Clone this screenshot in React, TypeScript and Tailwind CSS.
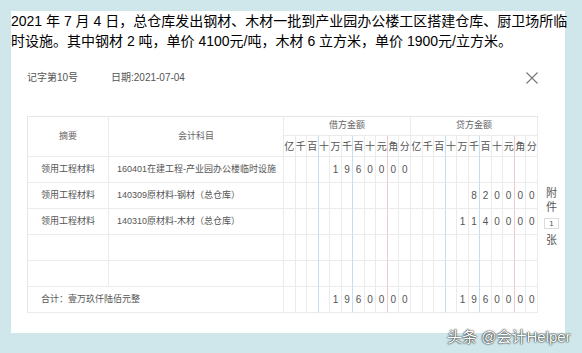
import React from 'react'

const FONT = "font-['Liberation_Sans','Noto_Sans_CJK_SC',sans-serif]"
const DIGITS = ['亿', '千', '百', '十', '万', '千', '百', '十', '元', '角', '分']

interface Entry {
  summary: string
  account: string
  debit: string
  credit: string
}

const entries: Entry[] = [
  { summary: '领用工程材料', account: '160401在建工程-产业园办公楼临时设施', debit: '1960000', credit: '' },
  { summary: '领用工程材料', account: '140309原材料-钢材（总仓库）', debit: '', credit: '820000' },
  { summary: '领用工程材料', account: '140310原材料-木材（总仓库）', debit: '', credit: '1140000' },
  { summary: '', account: '', debit: '', credit: '' },
  { summary: '', account: '', debit: '', credit: '' },
]

// right border colour of each amount column: blue between thousand groups, red before 角
function lineColor(i: number): string {
  if (i === 2 || i === 5) return 'border-r-[#bfe0f5]'
  if (i === 8) return 'border-r-[#f2c8c8]'
  return 'border-r-[#ebebeb]'
}

function spread(amount: string): string[] {
  const chars = amount.split('')
  return Array.from({ length: 11 }, (_, i) => chars[i - (11 - chars.length)] ?? '')
}

function AmountCells({ amount }: { amount: string }) {
  return (
    <>
      {spread(amount).map((d, i) => (
        <div
          key={i}
          className={`flex items-center justify-center border-r border-b border-b-[#ebebeb] text-[10px] text-[#555] ${lineColor(i)}`}
        >
          {d}
        </div>
      ))}
    </>
  )
}

const GRID = 'grid grid-cols-[81px_175px_repeat(22,minmax(0,1fr))]'

export default function App() {
  return (
    <div className={`relative w-[582px] h-[353px] bg-[#cfe7ea] pt-[11px] pl-[11px] ${FONT}`}>
      <div className="w-[554px] h-[322px] bg-white">
        <div className="text-[14px] leading-[20px] text-black whitespace-nowrap">
          <div>2021 年 7 月 4 日，总仓库发出钢材、木材一批到产业园办公楼工区搭建仓库、厨卫场所临</div>
          <div>时设施。其中钢材 2 吨，单价 4100元/吨，木材 6 立方米，单价 1900元/立方米。</div>
        </div>

        <div className="ml-[16px] mt-[20px] w-[511px] flex items-center justify-between text-[10px] leading-[14px] text-[#555]">
          <div className="flex">
            <span className="w-[84px]">记字第10号</span>
            <span>日期:2021-07-04</span>
          </div>
          <svg width="12" height="12" viewBox="0 0 12 12">
            <path d="M0.5 0.5L11.5 11.5M11.5 0.5L0.5 11.5" stroke="#777" strokeWidth="1.1" fill="none" />
          </svg>
        </div>

        <div className="ml-[16px] mt-[31px] flex">
          <div className="w-[511px] border-l border-t border-[#e6e6e6]">
            <div className={`${GRID} grid-rows-[19px_21px] text-[9px] text-[#666]`}>
              <div className="row-span-2 flex items-center justify-center border-r border-r-[#ebebeb] border-b border-b-[#ebebeb]">摘要</div>
              <div className="row-span-2 flex items-center justify-center border-r border-r-[#ebebeb] border-b border-b-[#ebebeb]">会计科目</div>
              <div className="col-span-11 flex items-center justify-center border-r border-r-[#ebebeb] border-b border-b-[#ebebeb]">借方金额</div>
              <div className="col-span-11 flex items-center justify-center border-r border-r-[#ebebeb] border-b border-b-[#ebebeb]">贷方金额</div>
              {[0, 1].map(side =>
                DIGITS.map((d, i) => (
                  <div
                    key={`${side}-${i}`}
                    className={`flex items-center justify-center border-r border-b border-b-[#ebebeb] text-[10px] text-[#555] ${lineColor(i)}`}
                  >
                    {d}
                  </div>
                )),
              )}
            </div>

            {entries.map((e, idx) => (
              <div key={idx} className={`${GRID} h-[26px] text-[9px] text-[#555]`}>
                <div className="flex items-center justify-center border-r border-r-[#ebebeb] border-b border-b-[#ebebeb]">{e.summary}</div>
                <div className="flex items-center pl-[8px] whitespace-nowrap border-r border-r-[#ebebeb] border-b border-b-[#ebebeb]">{e.account}</div>
                <AmountCells amount={e.debit} />
                <AmountCells amount={e.credit} />
              </div>
            ))}

            <div className={`${GRID} h-[26px] text-[9px] text-[#555]`}>
              <div className="col-span-2 flex items-center pl-[13px] border-r border-r-[#ebebeb] border-b border-b-[#ebebeb]">合计：壹万玖仟陆佰元整</div>
              <AmountCells amount="1960000" />
              <AmountCells amount="1960000" />
            </div>
          </div>

          <div className="ml-[6px] mt-[70px] w-[15px] flex flex-col items-center text-[11px] leading-[14px] text-[#555]">
            <span>附</span>
            <span>件</span>
            <div className="mt-[4px] w-[15px] h-[11px] border border-[#ddd] flex items-center justify-center text-[8px] leading-none">1</div>
            <span className="mt-[4px]">张</span>
          </div>
        </div>
      </div>

      <div className="absolute left-[447px] top-[327px] text-[15px] leading-[20px] text-white whitespace-nowrap [text-shadow:0_0_2px_rgba(0,0,0,0.9),0_0_1px_rgba(0,0,0,0.9)]">
        头条 @会计Helper
      </div>
    </div>
  )
}
